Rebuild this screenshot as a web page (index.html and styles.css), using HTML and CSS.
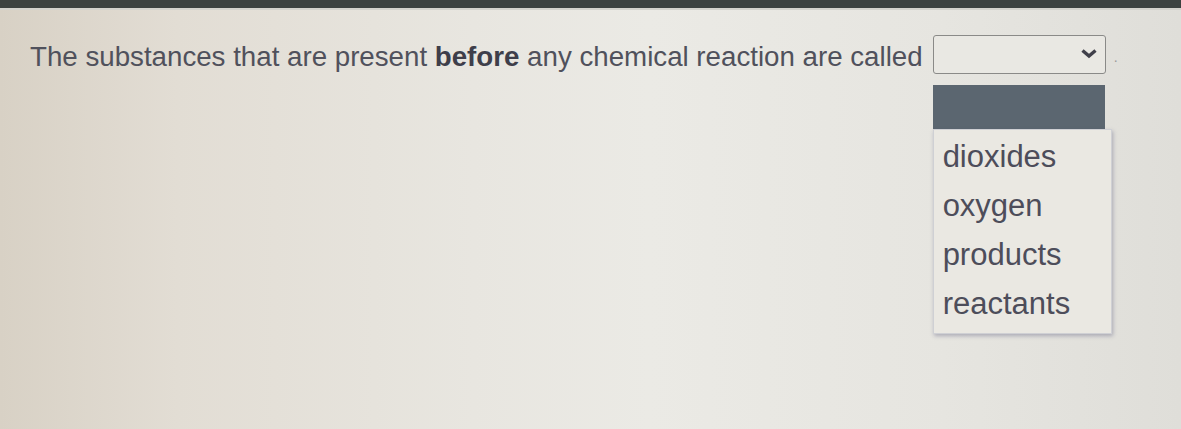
FILE: index.html
```html
<!DOCTYPE html>
<html lang="en">
<head>
  <meta charset="UTF-8">
  <meta name="viewport" content="width=device-width, initial-scale=1.0">
  <title>Question</title>
  <link rel="stylesheet" href="styles.css">
</head>
<body>
  <div class="top-bar"></div>
  <div class="question">
    <div class="prompt">
      <span class="prompt-text">The substances that are present <b>before</b> any chemical reaction are called</span>
      <div class="blank">
        <div class="select">
          <svg class="chevron" width="18" height="11" viewBox="0 0 18 11">
            <path d="M2.5 2.5 L9 8 L15.5 2.5" fill="none" stroke="#40404a" stroke-width="3.4"/>
          </svg>
        </div>
        <div class="menu">
          <div class="menu-selected"></div>
          <div class="menu-list">
            <div class="option">dioxides</div>
            <div class="option">oxygen</div>
            <div class="option">products</div>
            <div class="option">reactants</div>
          </div>
        </div>
      </div>
      <span class="dot">.</span>
    </div>
  </div>
</body>
</html>
```

FILE: styles.css
```css
html, body {
  margin: 0;
  height: 100%;
}
body {
  font-family: "Liberation Sans", Arial, sans-serif;
  background: linear-gradient(90deg, #d8d1c5 0%, #e2ddd4 15%, #e8e6e0 40%, #ebeae5 55%, #e6e5e0 80%, #dfded9 100%);
  overflow: hidden;
}
.top-bar {
  height: 8px;
  background: #3c4240;
  border-bottom: 2px solid #d3d2cc;
}
.question {
  padding: 25px 0 0 30px;
}
.prompt {
  display: flex;
  align-items: flex-start;
}
.prompt-text {
  margin-top: 6px;
  font-size: 27.7px;
  line-height: 32px;
  color: #50515c;
  white-space: nowrap;
}
.prompt-text b {
  color: #3e3e4a;
}
.blank {
  position: relative;
  margin-left: 10px;
}
.select {
  display: flex;
  align-items: center;
  justify-content: flex-end;
  width: 173px;
  height: 39px;
  border: 1px solid #8a8a88;
  border-radius: 3px;
  background: #e9e8e3;
  padding: 0 7px 2px 0;
  box-sizing: border-box;
}
.dot {
  margin: 14px 0 0 8px;
  font-size: 14px;
  color: #9a9a9a;
}
.menu {
  position: absolute;
  left: 0;
  top: 50px;
  width: 179px;
}
.menu-selected {
  width: 172px;
  height: 44px;
  background: #5b6670;
}
.menu-list {
  padding: 2px 0 5px 9px;
  background: #eae8e2;
  border: 1px solid #cfd0d4;
  box-shadow: 1px 2px 4px rgba(70, 70, 110, 0.35);
}
.option {
  font-size: 31px;
  line-height: 49px;
  color: #4d4d5a;
}
```
